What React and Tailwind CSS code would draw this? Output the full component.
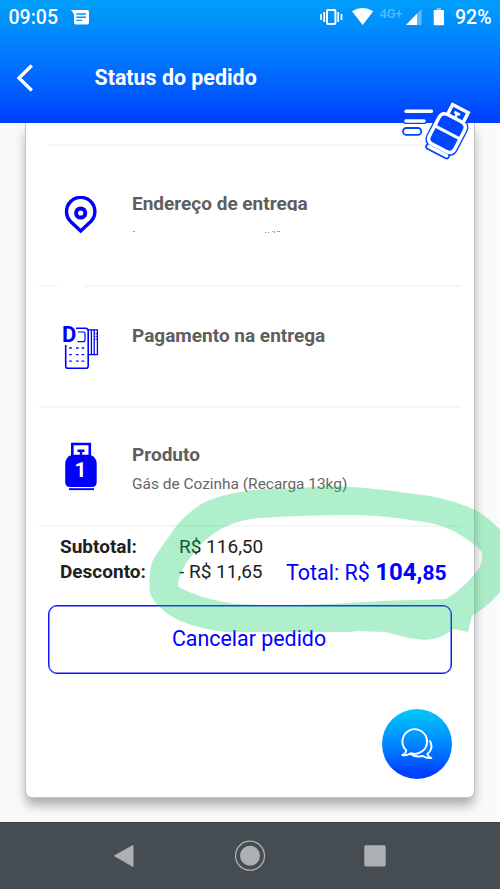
import clsx from 'clsx'

const totals = [
  { label: 'Subtotal:', value: 'R$ 116,50' },
  { label: 'Desconto:', value: '- R$ 11,65' },
]

function PinIcon() {
  return (
    <svg className="ml-px" width="34" height="38" viewBox="64 196 34 38" fill="none" stroke="#0000ff">
      <path d="M80.7 231 L70.6 221.5 A14.2 14.2 0 1 1 90.8 221.5 Z" strokeWidth="3.4" />
      <circle cx="80.7" cy="213" r="4.6" strokeWidth="4" />
    </svg>
  )
}

function CardMachineIcon() {
  return (
    <div className="relative mt-[2px] ml-[-1px] h-[44px] w-[38px]">
      <svg width="38" height="44" viewBox="62 326 38 44" fill="none" stroke="#0000ff" strokeWidth="1.6">
        <path d="M76 328.2 H85.5 Q88.2 328.2 88.2 331 V366 Q88.2 368.3 86 368.3 H68 Q65.7 368.3 65.7 366 V345" />
        <path d="M78 332 H83.5 Q85 332 85 333.5 V340 Q85 341.6 83.5 341.6 H77.5" strokeWidth="1.2" />
        <path d="M88.2 329.8 H97.4 V354.7 H88.2 M91.4 330 V354.5 M94.2 330 V354.5" strokeWidth="1.3" />
        <path d="M95.5 333.5 H97.4 M95.5 336.3 H97.4 M95.5 339 H97.4" strokeWidth="1" />
        {[348, 354.6, 361.2].map((y) => (
          <path key={y} d={`M69.2 ${y} h2.6 M76 ${y} h2.6 M81.6 ${y} h2.6`} strokeWidth="1.3" />
        ))}
      </svg>
      <span className="absolute top-[-2px] left-[0px] text-[22px] leading-[22px] font-bold text-[#0000ff]">D</span>
    </div>
  )
}

function BottleIcon() {
  return (
    <div className="relative mt-[-2px] ml-px h-[50px] w-[34px]">
      <svg width="34" height="50" viewBox="64 441 34 50">
        <path d="M72.3 462 V444 H89.8 V462" fill="none" stroke="#0000ff" strokeWidth="2.6" />
        <path d="M77.5 449.5 H84.5 V452 H82.2 V456 H79.8 V452 H77.5 Z" fill="#0000ff" />
        <path d="M72 454.8 H90 Q96.7 457 96.7 464 V482 Q96.7 487 92 487 H70 Q65.2 487 65.2 482 V464 Q65.2 457 72 454.8 Z" fill="#0000ff" />
        <rect x="69" y="488.2" width="25" height="1.9" fill="#0000ff" />
      </svg>
      <span className="absolute top-[17px] left-0 w-[33px] text-center text-[21px] leading-[24px] font-bold text-white">1</span>
    </div>
  )
}

function FastBottle({ className }) {
  const lines = (
    <>
      <path d="M406 111.3 H431.5 M406 121 H424" />
      <g transform="translate(447.2 132.7) rotate(27.5)">
        <path d="M-8.2 -17 V-27.5 H9.4 V-17" strokeLinecap="butt" strokeLinejoin="miter" />
        <path d="M-14.3 -10 Q-14.3 -16.3 -7 -16.3 H7 Q14.3 -16.3 14.3 -10 V11 Q14.3 17 8 17 H-8 Q-14.3 17 -14.3 11 Z" />
      </g>
    </>
  )
  return (
    <svg className={className} width="72" height="62" viewBox="400 100 72 62" fill="none">
      <g stroke="#0046ff" strokeWidth="6.2" strokeLinecap="round">{lines}</g>
      <rect x="403" y="128" width="18.2" height="6.8" rx="3.4" fill="#fff" stroke="#0046ff" strokeWidth="1.8" />
      <g transform="translate(447.2 132.7) rotate(27.5)">
        <rect x="-12.4" y="18" width="25" height="5.4" rx="2.2" fill="#fff" stroke="#0046ff" strokeWidth="1.8" />
        <rect x="-13" y="-16" width="26" height="32" rx="5" fill="#0046ff" />
        <path d="M-3.2 -21.7 H3.2 M0 -22 V-16" stroke="#fff" strokeWidth="2.6" />
      </g>
      <g stroke="#fff" strokeWidth="3.5" strokeLinecap="round">{lines}</g>
      <g transform="translate(447.2 132.7) rotate(27.5)">
        <path d="M-14 -0.4 H14" stroke="#fff" strokeWidth="3" />
      </g>
    </svg>
  )
}

function StatusBar() {
  return (
    <div className="flex h-[34px] items-center text-[19.5px] leading-[36px] text-white">
      <span className="mt-px ml-[8.5px] w-[62.5px] font-medium">09:05</span>
      <svg width="18" height="15" viewBox="0 0 18 15">
        <path d="M0 0 H16 Q18 0 18 2 V12.5 Q18 14.5 16 14.5 H5 Q3 14.5 3 12.5 V4 Z" fill="#fff" />
        <path d="M5.3 4 H15 M5.3 7.2 H15 M5.3 10.4 H11" stroke="#0090fb" strokeWidth="1.4" />
      </svg>
      <svg className="ml-auto" width="135" height="22" viewBox="318 6 135 22">
        <rect x="327" y="10" width="8.4" height="14" rx="1" fill="none" stroke="#fff" strokeWidth="2" />
        <path d="M321 14 V20 M324.2 12 V22 M338.2 12 V22 M341.5 14 V20" stroke="#fff" strokeWidth="1.7" />
        <path d="M352 11.3 Q362.5 4.5 373.3 11.3 L362.6 25 Z" fill="#fff" />
        <text x="379.5" y="17.5" fontSize="13" fontWeight="500" textLength="23" fill="#59b8fe">4G+</text>
        <path d="M406 25 L421.5 9 V25 Z" fill="#5fbaff" />
        <path d="M406 25 L417 13.6 V25 Z" fill="#fff" />
        <rect x="436.7" y="8" width="4.2" height="2" fill="#7cc6ff" />
        <rect x="433.7" y="10" width="10.3" height="15.3" rx="0.8" fill="#fff" />
      </svg>
      <span className="mt-px mr-[8px] ml-[2px] w-[37px] font-medium whitespace-nowrap">92%</span>
    </div>
  )
}

function OrderRow({ icon, title, children, className }) {
  return (
    <section className={clsx('flex border-b-2 border-[#f6f6f6]', className)}>
      <div className="w-[93px] shrink-0 pl-[24px]">{icon}</div>
      <div>
        <h2 className="text-[19px] leading-[24px] font-bold whitespace-nowrap text-[#5e5e5e]">{title}</h2>
        {children}
      </div>
    </section>
  )
}

// hand drawn highlight around the total
function Marker() {
  return (
    <svg className="pointer-events-none absolute top-[480px] left-[140px]" width="360" height="165" viewBox="140 480 360 165">
      <path
        fillRule="evenodd"
        fill="rgb(10,205,95)"
        fillOpacity="0.32"
        d="M347 486.7 C375 488 400 492 423 495 C445 498 462 504 473 509 C484 514 494 523 502 532 V590 C492 602 482 610 472 616 L468 632 L454 629 C447 634 440 638 433 639 C427 640 422 640 417 639 C404 638 395 634 385 632 L357 631 L350 632 H225 C210 630 196 627 183 622 C173 618 165 613 160 607 C152 600 149 594 149.5 585 C149.5 576 150 567 153 560 C160 548 169 537 177 525 C184 517 193 509 203 503 C216 497 231 493 247 491 C264 488 285 489 302 488 C317 486 333 486 347 486.7 Z
           M350 515 C320 515 290 516 260 518 C248 519 238 521 227 526 C218 530 210 536 203 542 C197 549 190 557 185 565 C181 572 179 577 178 584 C178 588 181 588 185 590 C200 597 215 601 233 603.5 C265 606 295 605 327 604 C360 603 385 600 417 600 L446 599 C461 590 471 579 480 567 Q483 559 482 552 C475 544 466 538 457 533 Q445 526 430 523 C405 519 380 515 350 515 Z"
      />
    </svg>
  )
}

export default function App() {
  return (
    <div className="relative flex h-[889px] w-[500px] flex-col overflow-hidden bg-[#fafafa] font-['Roboto',sans-serif]">
      <header className="z-10 h-[123px] shrink-0 bg-linear-to-b from-[#009ffa] to-[#0042ff] to-95%">
        <StatusBar />
        <div className="flex h-[88px] items-center pl-[16px] text-white">
          <svg width="18" height="28" viewBox="0 0 18 28" fill="none" stroke="#fff" strokeWidth="3.3">
            <path d="M15.8 1.5 L3 14 L15.8 26.5" />
          </svg>
          <h1 className="mt-px ml-[60.5px] text-[21.4px] font-bold">Status do pedido</h1>
        </div>
      </header>
      <FastBottle className="absolute top-[100px] left-[400px] z-20" />

      <main className="h-[699px] shrink-0 px-[25px]">
        <div className="flex h-[675px] flex-col rounded-b-[7px] border border-t-0 border-[#c4c4c4] bg-white px-[13px] shadow-[0_8px_12px_-1px_rgba(0,0,0,0.33)]">
          <div className="ml-[9px] h-[23px] shrink-0 border-b-2 border-[#f6f6f6]" />
          <OrderRow
            className="relative h-[141px] shrink-0 pt-[46px]"
            icon={<div className="pt-[4px]"><PinIcon /></div>}
            title="Endereço de entrega"
          >
            <div className="absolute top-[65px] left-[247px] h-[14px] w-[32px] bg-white" />
            <svg className="mt-[12px]" width="160" height="6" viewBox="0 0 160 6" fill="#999">
              <path d="M1 3 h2 v1 h-2z M133 4 h1.5 v1 h-1.5z M136 4 h1 v1 h-1z M140 3 h1 v1 h-1z M142 3 h1 v2 h-1z M145 3 h3 v1 h-3z" />
            </svg>
            <div className="absolute bottom-[-2px] left-[19px] h-[2px] w-[26px] bg-white" />
          </OrderRow>
          <OrderRow className="h-[121px] shrink-0 pt-[37px]" icon={<CardMachineIcon />} title="Pagamento na entrega" />
          <OrderRow className="h-[119px] shrink-0 pt-[35px]" icon={<BottleIcon />} title="Produto">
            <p className="mt-[5px] text-[15.45px] leading-[24px] whitespace-nowrap text-[#666]">Gás de Cozinha (Recarga 13kg)</p>
          </OrderRow>

          <div className="flex h-[78px] shrink-0 pt-[7px] pl-[21px]">
            <dl className="w-[226px] text-[19px] leading-[25px] text-[#212121]">
              {totals.map((t) => (
                <div key={t.label} className="flex">
                  <dt className="w-[119px] font-bold">{t.label}</dt>
                  <dd className="whitespace-nowrap">{t.value}</dd>
                </div>
              ))}
            </dl>
            <p className="pt-[24px] text-[21.5px] leading-[28px] whitespace-nowrap text-[#0000ff]">
              Total: R$ <b className="text-[24px]">104,</b><b className="text-[21px]">85</b>
            </p>
          </div>

          <button className="ml-[9px] h-[69px] w-[404px] shrink-0 rounded-[9px] border border-[#1414ff] pr-[2px] text-[21.4px] text-[#0000ff] shadow-[inset_0_0_0_0.5px_#1414ff]">
            Cancelar pedido
          </button>

          <button className="mt-[35px] mr-[9px] flex size-[70px] shrink-0 items-center justify-center self-end rounded-full bg-linear-to-b from-[#00c9f7] to-[#0040ff] to-90%">
            <svg width="34" height="34" viewBox="400 727 34 34" fill="none" stroke="#fff" strokeWidth="1.9" strokeLinejoin="round" strokeLinecap="round">
              <path d="M406.3 750.5 A12.3 12.3 0 1 1 410.8 753.2 Q406 756 402.4 755 Q406 753.5 406.3 750.5 Z" />
              <path d="M430 741 Q434 748.5 427.2 754 Q428 756.5 431.3 758 Q426.5 758.5 423 756 Q415 757.5 410 753.7" />
            </svg>
          </button>
        </div>
      </main>

      <nav className="flex h-[67px] shrink-0 items-center border-t border-[#384145] bg-[#454d52]">
        <svg width="500" height="40" viewBox="0 836 500 40" fill="#aeb1b3">
          <path d="M114.5 855.8 L133 845.5 V866.5 Z" stroke="#aeb1b3" strokeLinejoin="round" />
          <circle cx="250" cy="855.7" r="14.5" fill="none" stroke="#aeb1b3" strokeWidth="1.3" />
          <circle cx="250" cy="855.7" r="10" />
          <rect x="364.3" y="845.2" width="21.4" height="21.4" rx="1.6" />
        </svg>
      </nav>
      <Marker />
    </div>
  )
}
